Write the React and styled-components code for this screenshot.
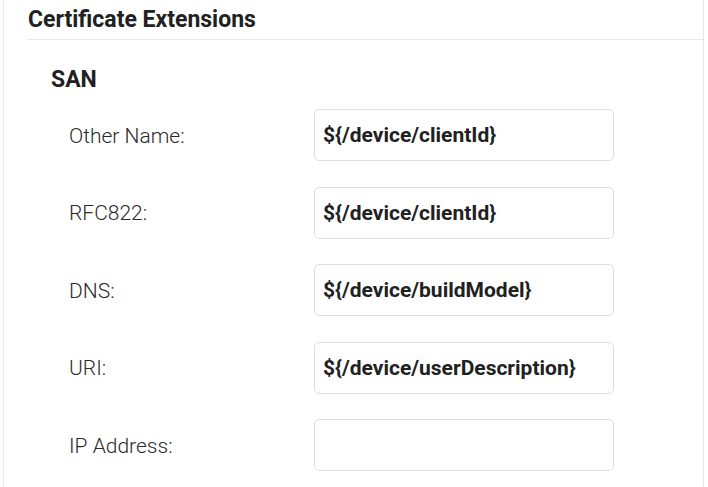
import React from "react";
import styled, { createGlobalStyle } from "styled-components";

const GlobalStyle = createGlobalStyle`
  body {
    margin: 0;
    background: #fff;
    font-family: Roboto, "Liberation Sans", sans-serif;
    color: #212121;
  }
`;

const Panel = styled.div`
  margin-left: 3px;
  width: 701px;
  min-height: 487px;
  border-left: 1px solid #e8e8e8;
  border-right: 1px solid #e8e8e8;
  box-sizing: border-box;
`;

const Header = styled.div`
  margin-left: 24px;
  height: 39px;
  border-bottom: 1px solid #e8e8e8;
  box-sizing: content-box;
  font-size: 23px;
  font-weight: 700;
  line-height: 39px;
  color: #212121;
`;

const Section = styled.div`
  padding-left: 47px;
  padding-top: 25px;
`;

const SectionTitle = styled.h3`
  margin: 0;
  font-size: 23px;
  font-weight: 700;
  line-height: 30px;
`;

const Rows = styled.div`
  display: flex;
  flex-direction: column;
  gap: 25.5px;
  padding-top: 14px;
  padding-left: 18px;
`;

const Row = styled.div`
  display: flex;
  align-items: center;
`;

const Label = styled.label`
  width: 245px;
  padding-top: 1px;
  font-size: 21px;
  font-weight: 300;
  color: #2a2a2a;
`;

const Input = styled.input`
  width: 300px;
  height: 52px;
  box-sizing: border-box;
  border: 1px solid #dedede;
  border-radius: 5px;
  padding: 0 8px;
  font-family: Roboto, "Liberation Sans", sans-serif;
  font-size: 21px;
  font-weight: 700;
  color: #212121;
  outline: none;
  background: #fff;
`;

const fields = [
  { label: "Other Name:", value: "${/device/clientId}" },
  { label: "RFC822:", value: "${/device/clientId}" },
  { label: "DNS:", value: "${/device/buildModel}" },
  { label: "URI:", value: "${/device/userDescription}" },
  { label: "IP Address:", value: "" },
];

const App = () => {
  return (
    <>
      <GlobalStyle />
      <Panel>
        <Header>Certificate Extensions</Header>
        <Section>
          <SectionTitle>SAN</SectionTitle>
          <Rows>
            {fields.map((f) => (
              <Row key={f.label}>
                <Label>{f.label}</Label>
                <Input defaultValue={f.value} readOnly />
              </Row>
            ))}
          </Rows>
        </Section>
      </Panel>
    </>
  );
};

export default App;
